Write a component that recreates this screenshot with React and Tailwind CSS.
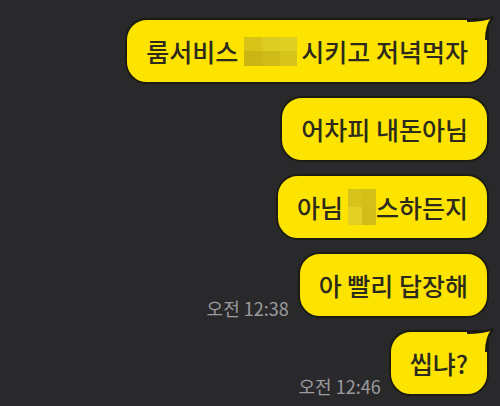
import React from 'react';

const FONT = { fontFamily: '"Noto Sans CJK KR", "Noto Sans", sans-serif' };

const Tail = () => (
    <svg className="absolute -right-[8px] -top-[5px] w-[30px] h-[30px] overflow-visible" viewBox="-22 -5 30 30">
        <path d="M -20 1 Q -4 1 6 -3 Q -1 5 -1 20 L -20 20 Z" fill="#fde400" />
        <path d="M -20 1 Q -4 1 6 -3 Q -1 5 -1 20" fill="none" stroke="#1c1b12" strokeWidth="2" />
    </svg>
);

const Bubble = ({ children, tail, className = '' }) => (
    <div className={`relative h-[66px] pl-[19px] pr-[19px] flex items-center rounded-[22px] border-2 border-[#1c1b12] bg-[#fde400] text-[25px] font-medium leading-none text-[#2b2a1c] whitespace-nowrap ${tail ? 'rounded-tr-none' : ''} ${className}`}>
        {children}
        {tail && <Tail />}
    </div>
);

const Time = ({ children }) => (
    <span className="text-[18px] leading-none text-[#9c9c9e] mb-[1px] whitespace-nowrap">{children}</span>
);

export default function App() {
    return (
        <div className="w-[500px] h-[406px] overflow-hidden bg-[#29292b] flex flex-col items-end pr-[11px] pt-[18px] gap-[12px]" style={FONT}>
            <Bubble tail>
                룸서비스
                <span className="ml-[6px] mr-[4px] grid grid-cols-3 w-[53px] h-[29px]">
                    <span className="bg-[#d8c418]" />
                    <span className="bg-[#dccb20]" />
                    <span className="bg-[#dfce22]" />
                    <span className="bg-[#c9b514]" />
                    <span className="bg-[#cfbb18]" />
                    <span className="bg-[#d6c41c]" />
                </span>
                시키고 저녁먹자
            </Bubble>

            <Bubble>어차피 내돈아님</Bubble>

            <Bubble>
                아님
                <span className="ml-[5px] grid grid-cols-2 w-[28px] h-[36px]">
                    <span className="bg-[#d6c41c]" />
                    <span className="bg-[#d2bf18]" />
                    <span className="bg-[#e2d024]" />
                    <span className="bg-[#d0bd18]" />
                </span>
                스하든지
            </Bubble>

            <div className="flex items-end gap-[9px]">
                <Time>오전 12:38</Time>
                <Bubble>아 빨리 답장해</Bubble>
            </div>

            <div className="flex items-end gap-[8px]">
                <Time>오전 12:46</Time>
                <Bubble tail>씹냐?</Bubble>
            </div>
        </div>
    );
}
